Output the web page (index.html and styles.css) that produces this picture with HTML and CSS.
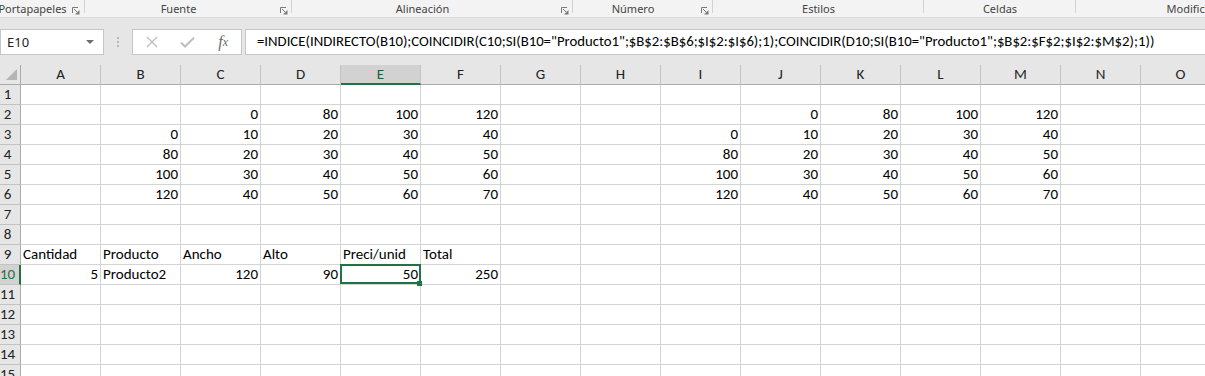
FILE: index.html
```html
<!DOCTYPE html>
<html lang="es">
<head>
<meta charset="utf-8">
<title>Excel</title>
<link rel="stylesheet" href="styles.css">
</head>
<body>
<div class="ribbon">
  <div class="group g1"><span class="glabel">Portapapeles</span><span class="launch"><svg width="8" height="8" viewBox="0 0 8 8"><path d="M0.5 6V0.5H6" stroke="#7a7a7a" fill="none"/><path d="M2 2L5.5 5.5" stroke="#7a7a7a"/><path d="M7.5 3V7.5H3Z" fill="#7a7a7a"/></svg></span></div>
  <div class="group g2"><span class="glabel">Fuente</span><span class="launch"><svg width="8" height="8" viewBox="0 0 8 8"><path d="M0.5 6V0.5H6" stroke="#7a7a7a" fill="none"/><path d="M2 2L5.5 5.5" stroke="#7a7a7a"/><path d="M7.5 3V7.5H3Z" fill="#7a7a7a"/></svg></span></div>
  <div class="group g3"><span class="glabel">Alineación</span><span class="launch"><svg width="8" height="8" viewBox="0 0 8 8"><path d="M0.5 6V0.5H6" stroke="#7a7a7a" fill="none"/><path d="M2 2L5.5 5.5" stroke="#7a7a7a"/><path d="M7.5 3V7.5H3Z" fill="#7a7a7a"/></svg></span></div>
  <div class="group g4"><span class="glabel">Número</span><span class="launch"><svg width="8" height="8" viewBox="0 0 8 8"><path d="M0.5 6V0.5H6" stroke="#7a7a7a" fill="none"/><path d="M2 2L5.5 5.5" stroke="#7a7a7a"/><path d="M7.5 3V7.5H3Z" fill="#7a7a7a"/></svg></span></div>
  <div class="group g5"><span class="glabel">Estilos</span></div>
  <div class="group g6"><span class="glabel">Celdas</span></div>
  <div class="group g7 last"><span class="glabel">Modificar</span></div>
</div>

<div class="fbar">
  <div class="namebox"><span class="nbtext">E10</span><svg class="dd" width="8" height="4" viewBox="0 0 8 4"><path d="M0 0H8L4 4Z" fill="#6d6d6d"/></svg></div>
  <div class="dots"><i></i><i></i><i></i></div>
  <div class="fnbox">
    <span class="fbtn"><svg width="12" height="12" viewBox="0 0 12 12"><path d="M1 1L11 11M11 1L1 11" stroke="#bdbdbd" stroke-width="1.4"/></svg></span>
    <span class="fbtn"><svg width="15" height="11" viewBox="0 0 15 11"><path d="M1 5.5L5 9.5L14 0.8" stroke="#bdbdbd" stroke-width="2" fill="none"/></svg></span>
    <span class="fbtn fx">f<span class="fxx">x</span></span>
  </div>
  <div class="formula">=INDICE(INDIRECTO(B10);COINCIDIR(C10;SI(B10="Producto1";$B$2:$B$6;$I$2:$I$6);1);COINCIDIR(D10;SI(B10="Producto1";$B$2:$F$2;$I$2:$M$2);1))</div>
</div>

<div class="sheet">
  <div class="corner"><svg width="21" height="20" viewBox="0 0 21 20"><path d="M6 16H17V5Z" fill="#b4b4b4"/></svg></div>
  <div class="ch">A</div><div class="ch">B</div><div class="ch">C</div><div class="ch">D</div><div class="ch csel">E</div><div class="ch">F</div><div class="ch">G</div><div class="ch">H</div><div class="ch">I</div><div class="ch">J</div><div class="ch">K</div><div class="ch">L</div><div class="ch">M</div><div class="ch">N</div><div class="ch">O</div>

  <div class="rh">1</div>
  <div class="c"></div><div class="c"></div><div class="c"></div><div class="c"></div><div class="c"></div><div class="c"></div><div class="c"></div><div class="c"></div><div class="c"></div><div class="c"></div><div class="c"></div><div class="c"></div><div class="c"></div><div class="c"></div><div class="c"></div>

  <div class="rh">2</div>
  <div class="c"></div><div class="c"></div><div class="c n">0</div><div class="c n">80</div><div class="c n">100</div><div class="c n">120</div><div class="c"></div><div class="c"></div><div class="c"></div><div class="c n">0</div><div class="c n">80</div><div class="c n">100</div><div class="c n">120</div><div class="c"></div><div class="c"></div>

  <div class="rh">3</div>
  <div class="c"></div><div class="c n">0</div><div class="c n">10</div><div class="c n">20</div><div class="c n">30</div><div class="c n">40</div><div class="c"></div><div class="c"></div><div class="c n">0</div><div class="c n">10</div><div class="c n">20</div><div class="c n">30</div><div class="c n">40</div><div class="c"></div><div class="c"></div>

  <div class="rh">4</div>
  <div class="c"></div><div class="c n">80</div><div class="c n">20</div><div class="c n">30</div><div class="c n">40</div><div class="c n">50</div><div class="c"></div><div class="c"></div><div class="c n">80</div><div class="c n">20</div><div class="c n">30</div><div class="c n">40</div><div class="c n">50</div><div class="c"></div><div class="c"></div>

  <div class="rh">5</div>
  <div class="c"></div><div class="c n">100</div><div class="c n">30</div><div class="c n">40</div><div class="c n">50</div><div class="c n">60</div><div class="c"></div><div class="c"></div><div class="c n">100</div><div class="c n">30</div><div class="c n">40</div><div class="c n">50</div><div class="c n">60</div><div class="c"></div><div class="c"></div>

  <div class="rh">6</div>
  <div class="c"></div><div class="c n">120</div><div class="c n">40</div><div class="c n">50</div><div class="c n">60</div><div class="c n">70</div><div class="c"></div><div class="c"></div><div class="c n">120</div><div class="c n">40</div><div class="c n">50</div><div class="c n">60</div><div class="c n">70</div><div class="c"></div><div class="c"></div>

  <div class="rh">7</div>
  <div class="c"></div><div class="c"></div><div class="c"></div><div class="c"></div><div class="c"></div><div class="c"></div><div class="c"></div><div class="c"></div><div class="c"></div><div class="c"></div><div class="c"></div><div class="c"></div><div class="c"></div><div class="c"></div><div class="c"></div>

  <div class="rh">8</div>
  <div class="c"></div><div class="c"></div><div class="c"></div><div class="c"></div><div class="c"></div><div class="c"></div><div class="c"></div><div class="c"></div><div class="c"></div><div class="c"></div><div class="c"></div><div class="c"></div><div class="c"></div><div class="c"></div><div class="c"></div>

  <div class="rh">9</div>
  <div class="c">Cantidad</div><div class="c">Producto</div><div class="c">Ancho</div><div class="c">Alto</div><div class="c">Preci/unid</div><div class="c">Total</div><div class="c"></div><div class="c"></div><div class="c"></div><div class="c"></div><div class="c"></div><div class="c"></div><div class="c"></div><div class="c"></div><div class="c"></div>

  <div class="rh rsel">10</div>
  <div class="c n">5</div><div class="c">Producto2</div><div class="c n">120</div><div class="c n">90</div><div class="c n sel">50</div><div class="c n">250</div><div class="c"></div><div class="c"></div><div class="c"></div><div class="c"></div><div class="c"></div><div class="c"></div><div class="c"></div><div class="c"></div><div class="c"></div>

  <div class="rh">11</div>
  <div class="c"></div><div class="c"></div><div class="c"></div><div class="c"></div><div class="c"></div><div class="c"></div><div class="c"></div><div class="c"></div><div class="c"></div><div class="c"></div><div class="c"></div><div class="c"></div><div class="c"></div><div class="c"></div><div class="c"></div>

  <div class="rh">12</div>
  <div class="c"></div><div class="c"></div><div class="c"></div><div class="c"></div><div class="c"></div><div class="c"></div><div class="c"></div><div class="c"></div><div class="c"></div><div class="c"></div><div class="c"></div><div class="c"></div><div class="c"></div><div class="c"></div><div class="c"></div>

  <div class="rh">13</div>
  <div class="c"></div><div class="c"></div><div class="c"></div><div class="c"></div><div class="c"></div><div class="c"></div><div class="c"></div><div class="c"></div><div class="c"></div><div class="c"></div><div class="c"></div><div class="c"></div><div class="c"></div><div class="c"></div><div class="c"></div>

  <div class="rh">14</div>
  <div class="c"></div><div class="c"></div><div class="c"></div><div class="c"></div><div class="c"></div><div class="c"></div><div class="c"></div><div class="c"></div><div class="c"></div><div class="c"></div><div class="c"></div><div class="c"></div><div class="c"></div><div class="c"></div><div class="c"></div>

  <div class="rh">15</div>
  <div class="c"></div><div class="c"></div><div class="c"></div><div class="c"></div><div class="c"></div><div class="c"></div><div class="c"></div><div class="c"></div><div class="c"></div><div class="c"></div><div class="c"></div><div class="c"></div><div class="c"></div><div class="c"></div><div class="c"></div>
</div>
</body>
</html>
```

FILE: styles.css
```css
html, body {
  margin: 0;
  padding: 0;
}
body {
  width: 1205px;
  height: 376px;
  overflow: hidden;
  background: #e6e6e6;
  font-family: "Carlito", "Lato", "Liberation Sans", sans-serif;
}

/* ribbon group labels */
.ribbon {
  display: flex;
  height: 17px;
  background: #f3f3f3;
  border-bottom: 1px solid #d9d9d9;
  font-family: "Segoe UI", "Noto Sans", sans-serif;
  font-size: 11px;
  color: #444;
  white-space: nowrap;
}
.group {
  position: relative;
  display: flex;
  flex: none;
  overflow: hidden;
}
.group::after {
  content: "";
  position: absolute;
  right: 0;
  top: 0;
  width: 1px;
  height: 13px;
  background: #d2d2d2;
}
.group.last::after { display: none; }
.g1 { width: 85px; }
.g2 { width: 207px; }
.g3 { width: 281px; }
.g4 { width: 140px; }
.g5 { width: 211px; }
.g6 { width: 152px; }
.g7 { width: 230px; }
.glabel {
  flex: 1 1 0;
  min-width: 0;
  display: flex;
  justify-content: center;
  line-height: 17px;
}
.launch {
  flex: none;
  width: 20px;
  box-sizing: border-box;
  padding: 7px 0 0 8px;
  line-height: 0;
}
.g1 .launch { padding-left: 7px; }

/* formula bar */
.fbar {
  display: flex;
  height: 26px;
  margin-top: 11px;
}
.namebox {
  flex: none;
  width: 104px;
  box-sizing: border-box;
  background: #fff;
  border: 1px solid #c6c6c6;
  display: flex;
  align-items: center;
  padding-left: 6px;
}
.nbtext {
  font-family: "Segoe UI", "Noto Sans", sans-serif;
  font-size: 13px;
  color: #222;
  line-height: 24px;
}
.dd {
  margin-left: auto;
  margin-right: 9px;
}
.dots {
  flex: none;
  width: 28px;
  display: flex;
  flex-direction: column;
  align-items: center;
  justify-content: center;
  gap: 2px;
}
.dots i {
  display: block;
  width: 2px;
  height: 2px;
  background: #b8b8b8;
}
.fnbox {
  flex: none;
  width: 110px;
  box-sizing: border-box;
  background: #fff;
  border: 1px solid #c6c6c6;
  display: flex;
  align-items: center;
  padding-left: 1px;
}
.fbtn {
  width: 36px;
  display: flex;
  justify-content: center;
  align-items: center;
}
.fx {
  font-family: "Liberation Serif", serif;
  font-style: italic;
  font-size: 16px;
  color: #6b6b6b;
  line-height: 24px;
}
.fxx {
  font-size: 12px;
  font-style: italic;
}
.formula {
  flex: none;
  width: 980px;
  margin-left: 3px;
  box-sizing: border-box;
  background: #fff;
  border: 1px solid #c6c6c6;
  padding-left: 11px;
  font-size: 14.75px;
  line-height: 22px;
  color: #000;
  white-space: nowrap;
  overflow: hidden;
}

/* sheet */
.sheet {
  margin-top: 10px;
  width: 1221px;
  display: grid;
  grid-template-columns: 21px repeat(15, 80px);
  grid-auto-rows: 20px;
  background: #fff;
  font-size: 15px;
  line-height: 19px;
  color: #000;
}
.corner {
  background: #e6e6e6;
  box-sizing: border-box;
  border-right: 1px solid #ababab;
  border-bottom: 1px solid #ababab;
  line-height: 0;
}
.corner svg { margin: -1px 0 0 0; }
.ch {
  background: #e6e6e6;
  box-sizing: border-box;
  border-right: 1px solid #c3c3c3;
  border-bottom: 1px solid #ababab;
  text-align: center;
  color: #222;
}
.ch.csel {
  background: #d2d2d2;
  border-bottom: 2px solid #217346;
  color: #1d5e38;
}
.rh {
  background: #e6e6e6;
  box-sizing: border-box;
  border-right: 1px solid #ababab;
  border-bottom: 1px solid #c3c3c3;
  text-align: center;
  padding-right: 5px;
  color: #222;
}
.rh.rsel {
  background: #d2d2d2;
  border-right: 2px solid #217346;
  padding-right: 4px;
  color: #217346;
}
.c {
  box-sizing: border-box;
  border-right: 1px solid #d4d4d4;
  border-bottom: 1px solid #d4d4d4;
  padding: 0 2px;
  white-space: nowrap;
}
.c.n { text-align: right; }
.c.sel { position: relative; }
.c.sel::after {
  content: "";
  position: absolute;
  left: -1px;
  top: -1px;
  right: -1px;
  bottom: 0;
  border: 2px solid #217346;
}
.c.sel::before {
  content: "";
  position: absolute;
  right: -2px;
  bottom: -2px;
  width: 5px;
  height: 5px;
  background: #217346;
  z-index: 1;
}
```
